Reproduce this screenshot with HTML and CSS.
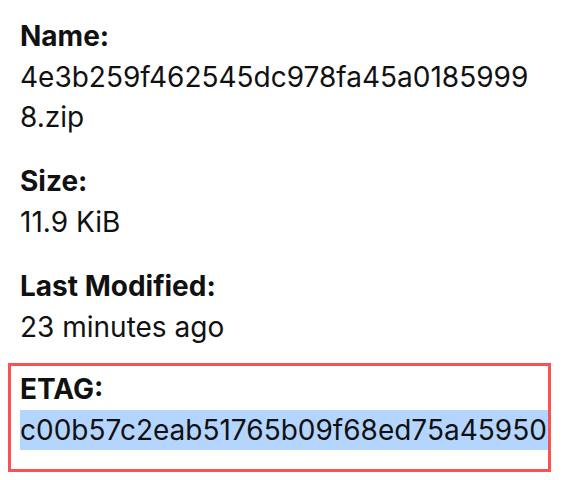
FILE: index.html
```html
<!DOCTYPE html>
<html>
<head>
<meta charset="utf-8">
<link rel="stylesheet" href="styles.css">
</head>
<body>
<dl class="details">
  <div class="item">
    <dt class="label">Name:</dt>
    <dd class="value">4e3b259f462545dc978fa45a0185999<br>8.zip</dd>
  </div>
  <div class="item">
    <dt class="label">Size:</dt>
    <dd class="value">11.9 KiB</dd>
  </div>
  <div class="item">
    <dt class="label">Last Modified:</dt>
    <dd class="value">23 minutes ago</dd>
  </div>
  <div class="item item-highlight">
    <dt class="label">ETAG:</dt>
    <dd class="value"><span class="selected">c00b57c2eab51765b09f68ed75a45950</span></dd>
  </div>
</dl>
</body>
</html>
```

FILE: styles.css
```css
html, body {
  margin: 0;
  padding: 0;
  background: #ffffff;
}

body {
  font-family: Inter, "Liberation Sans", sans-serif;
  color: #111111;
}

.details {
  margin: 0;
  padding: 16px 0 0 20px;
  display: flex;
  flex-direction: column;
  gap: 24px;
}

.item {
  display: flex;
  flex-direction: column;
}

.label {
  font-size: 28px;
  font-weight: 700;
  line-height: 41px;
  margin: 0;
}

.value {
  font-size: 28px;
  font-weight: 400;
  line-height: 40px;
  margin: 0;
}

.item-highlight {
  margin: -8px 21px 0 -12px;
  border: 3px solid #fa5252;
  padding: 3px 0 19px 9px;
}

.selected {
  display: block;
  background: #b4d5fe;
}
```
